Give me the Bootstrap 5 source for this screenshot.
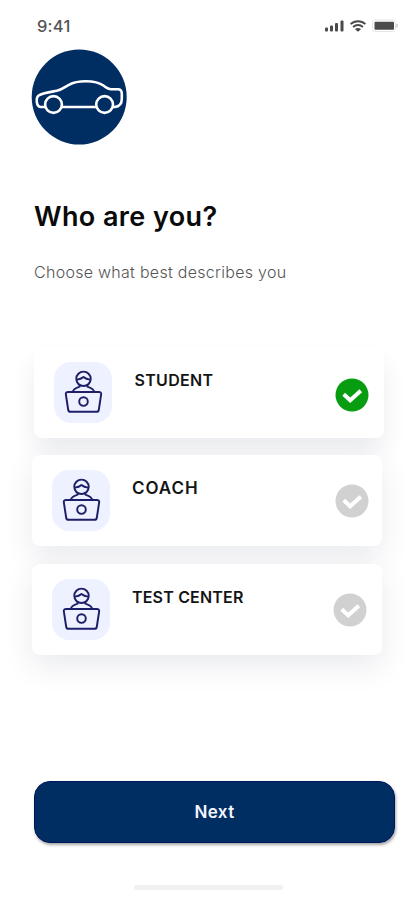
<!DOCTYPE html>
<html lang="en">
<head>
<meta charset="utf-8">
<meta name="viewport" content="width=device-width, initial-scale=1">
<title>Who are you?</title>
<link href="https://cdn.jsdelivr.net/npm/bootstrap@5.3.0/dist/css/bootstrap.min.css" rel="stylesheet">
<style>
  body { font-family: Inter, "Liberation Sans", sans-serif; background: #fff; color: #0b0b0d; }
  .screen { width: 415px; height: 900px; padding: 0 20px 10px 34px; }
  .status { height: 49px; padding: 17px 0 0 3px; margin-right: -3px; }
  .clock { font-size: 16.5px; line-height: 18px; color: #555; font-weight: 500; letter-spacing: .2px; }
  .logo { width: 96px; height: 96px; margin-left: -3px; }
  .title { font-size: 27px; line-height: 32px; font-weight: 600; letter-spacing: .4px; margin-top: 56px; color: #0a0a0a; }
  .subtitle { font-size: 16px; line-height: 20px; font-weight: 300; letter-spacing: .28px; margin-top: 29px; color: #555; }
  .options { margin-top: 64.5px; gap: 17.5px; }
  .option { width: 350px; height: 91px; border: 0; border-radius: 8px; padding: 15px 13px 15px 20px; margin-left: -2px; box-shadow: 0 11px 30px rgba(40,45,85,.10); }
  .option.chosen { margin-left: 0; padding-right: 15px; box-shadow: 0 15px 26px -2px rgba(40,45,85,.10); }
  .option:last-child { padding-right: 15px; }
  .tile { width: 58px; height: 61px; border-radius: 17px; background: #eef1ff; }
  .label { font-size: 16px; line-height: 20px; font-weight: 600; margin: 8px 0 0 22.5px; color: #141414; letter-spacing: .3px; }
  .label.wide { font-size: 17px; letter-spacing: .95px; margin-left: 22px; }
  .label.long { letter-spacing: .18px; margin-left: 22px; }
  .tick { width: 34px; height: 34px; color: #d1d1d1; }
  .chosen .tick { color: #089c10; margin-top: 5px; }
  .option:last-child .tick { margin-top: 2px; }
  .next { height: 62px; width: 361px; border-radius: 16px; background: #002d62; border: 1px solid #00165a; color: #f4f5ff; font-size: 17px; letter-spacing: .4px; padding-top: 8px; font-weight: 600; box-shadow: 1px 2px 3px rgba(0,0,0,.35); }
  .homebar { width: 149px; height: 5px; border-radius: 2px; background: #f1f1f1; margin: 42px 0 0 100px; }
</style>
</head>
<body>
<svg class="d-none" aria-hidden="true">
  <symbol id="person" viewBox="0 0 40 46">
    <g fill="none" stroke="#1d1f68" stroke-width="2" stroke-linejoin="round" stroke-linecap="round">
      <circle cx="20" cy="9" r="7.4"/>
      <path d="M13.300 9.800c3-.2 4.900-1 6.700-2.600 1.800 1.600 3.700 2.400 6.700 2.600M16 15.500v1.500c-3.400 1.100-6.300 2.600-7.200 5.500M24 15.500v1.500c3.400 1.100 6.300 2.600 7.200 5.500"/>
      <path d="M4.300 22.500h31.400c1.800 0 2.700 1 2.400 2.500l-2.400 15.700c-.2 1.400-1 2.100-2.400 2.100H6.700c-1.400 0-2.200-.7-2.400-2.100L1.900 25c-.3-1.500.6-2.500 2.400-2.500z"/>
      <circle cx="20" cy="32.300" r="4.400"/>
    </g>
  </symbol>
  <symbol id="check" viewBox="0 0 34 34">
    <circle cx="17" cy="17" r="16.500" fill="currentColor"/>
    <path d="M8.700 16.200l6.500 6 10.600-9.500" fill="none" stroke="#fff" stroke-width="4"/>
  </symbol>
</svg>
<main class="screen d-flex flex-column">
  <header class="status d-flex justify-content-between align-items-start">
    <span class="clock">9:41</span>
    <svg width="75" height="20" viewBox="0 0 75 20">
      <g fill="#4a4a4a">
        <rect x="2" y="10.500" width="3" height="4" rx="1"/><rect x="7" y="8.500" width="3" height="6" rx="1"/><rect x="12" y="6" width="3" height="8.500" rx="1"/><rect x="17.500" y="3.500" width="3" height="11" rx="1"/>
        <path d="M32 12.300l3 2.400 3-2.400a4 4 0 0 0-6 0z"/>
        <rect x="51.500" y="4.800" width="19.500" height="8" rx="1"/>
      </g>
      <path d="M27.600 7.200a10.700 10.700 0 0 1 14.800 0M30.100 10a7 7 0 0 1 9.800 0" fill="none" stroke="#4a4a4a" stroke-width="1.800"/>
      <rect x="49.500" y="3" width="23" height="11.600" rx="3" fill="none" stroke="#e4e4e4"/>
      <path d="M74 7v3.500" stroke="#ccc" stroke-width="1.500"/>
    </svg>
  </header>
  <svg class="logo flex-shrink-0" viewBox="31 49 96 96">
    <circle cx="79.200" cy="97" r="47.500" fill="#002d62"/>
    <g fill="none" stroke="#fff" stroke-width="2.600" stroke-linejoin="round">
      <circle cx="53.500" cy="104.500" r="8.400"/><circle cx="104.600" cy="104.500" r="8.400"/>
      <path d="M45 107h-4c-2.200 0-3.800-2-4.200-5-.4-3.500.2-5.500 2.500-6.800 4-2.300 11-3.200 17.500-4.400 4.500-.8 7.500-3.600 12-6 5.500-3 11-3.600 17-3.600 7.500 0 13 .9 18 4.600 2.500 1.800 4.500 3.400 7 3.400h7c2.800 0 4 1.500 4 4.500v5c0 5-2.500 7.800-7 8.300h-2M62 107h34"/>
    </g>
  </svg>
  <h1 class="title mb-0">Who are you?</h1>
  <p class="subtitle mb-0">Choose what best describes you</p>
  <section class="options d-flex flex-column">
    <div class="option chosen card flex-row align-items-center">
      <div class="tile d-flex align-items-center justify-content-center"><svg width="39" height="45"><use href="#person"/></svg></div>
      <span class="label align-self-start">STUDENT</span>
      <svg class="tick ms-auto"><use href="#check"/></svg>
    </div>
    <div class="option card flex-row align-items-center">
      <div class="tile d-flex align-items-center justify-content-center"><svg width="39" height="45"><use href="#person"/></svg></div>
      <span class="label wide align-self-start">COACH</span>
      <svg class="tick ms-auto"><use href="#check"/></svg>
    </div>
    <div class="option card flex-row align-items-center">
      <div class="tile d-flex align-items-center justify-content-center"><svg width="39" height="45"><use href="#person"/></svg></div>
      <span class="label long align-self-start">TEST CENTER</span>
      <svg class="tick ms-auto"><use href="#check"/></svg>
    </div>
  </section>
  <footer class="mt-auto">
    <button class="next btn" type="button">Next</button>
    <div class="homebar"></div>
  </footer>
</main>
<script src="https://cdn.jsdelivr.net/npm/bootstrap@5.3.0/dist/js/bootstrap.bundle.min.js"></script>
</body>
</html>
